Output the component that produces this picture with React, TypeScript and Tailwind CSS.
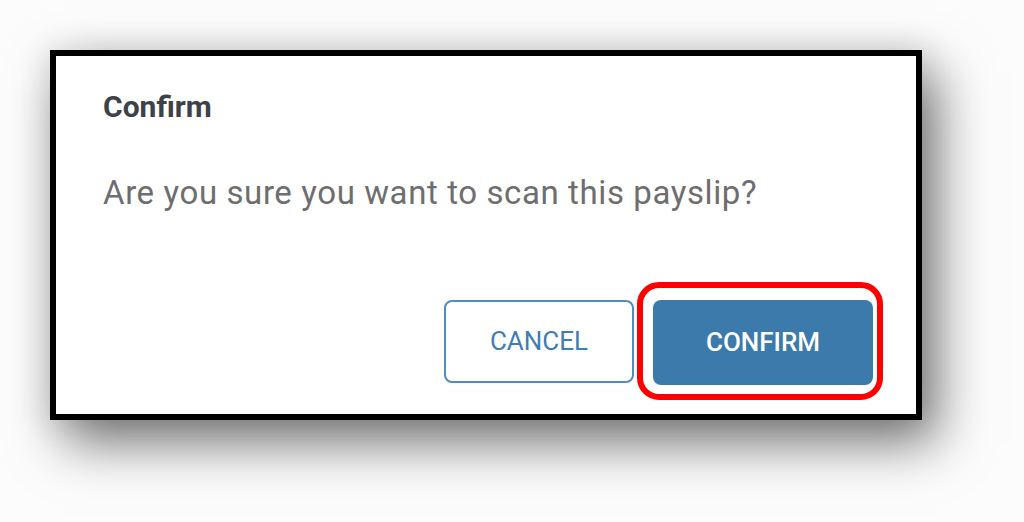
export default function App() {
  return (
    <div className="h-[522px] w-full overflow-hidden bg-[#fcfcfc] pl-[50px] pt-[50px] font-['Roboto','Liberation_Sans',sans-serif]">
      <div className="flex h-[370px] w-[872px] flex-col border-[6px] border-black bg-white pl-[47px] pr-[33px] pb-[14px] pt-[34px] shadow-[14px_22px_50px_rgba(0,0,0,0.55),0_0_26px_8px_rgba(0,0,0,0.06)]">
        <h2 className="text-[30px] font-bold leading-[34px] text-[#3c4247]">Confirm</h2>
        <p className="mt-[49px] text-[33px] leading-[40px] tracking-[0.6px] text-[#6e6e6e]">
          Are you sure you want to scan this payslip?
        </p>

        <div className="mt-auto flex items-center justify-end gap-[3px]">
          <button className="h-[83px] w-[190px] rounded-[8px] border-2 border-[#4f8cc0] bg-white text-[26px] uppercase text-[#3f7db3]">
            Cancel
          </button>
          {/* red highlight ring around the primary action */}
          <div className="rounded-[22px] border-[6px] border-[#ff0000] pb-[9px] pl-[10px] pr-[4px] pt-[12px]">
            <button className="h-[85px] w-[220px] rounded-[8px] bg-[#3b7aab] text-[26px] font-medium uppercase text-white">
              Confirm
            </button>
          </div>
        </div>
      </div>
    </div>
  );
}
